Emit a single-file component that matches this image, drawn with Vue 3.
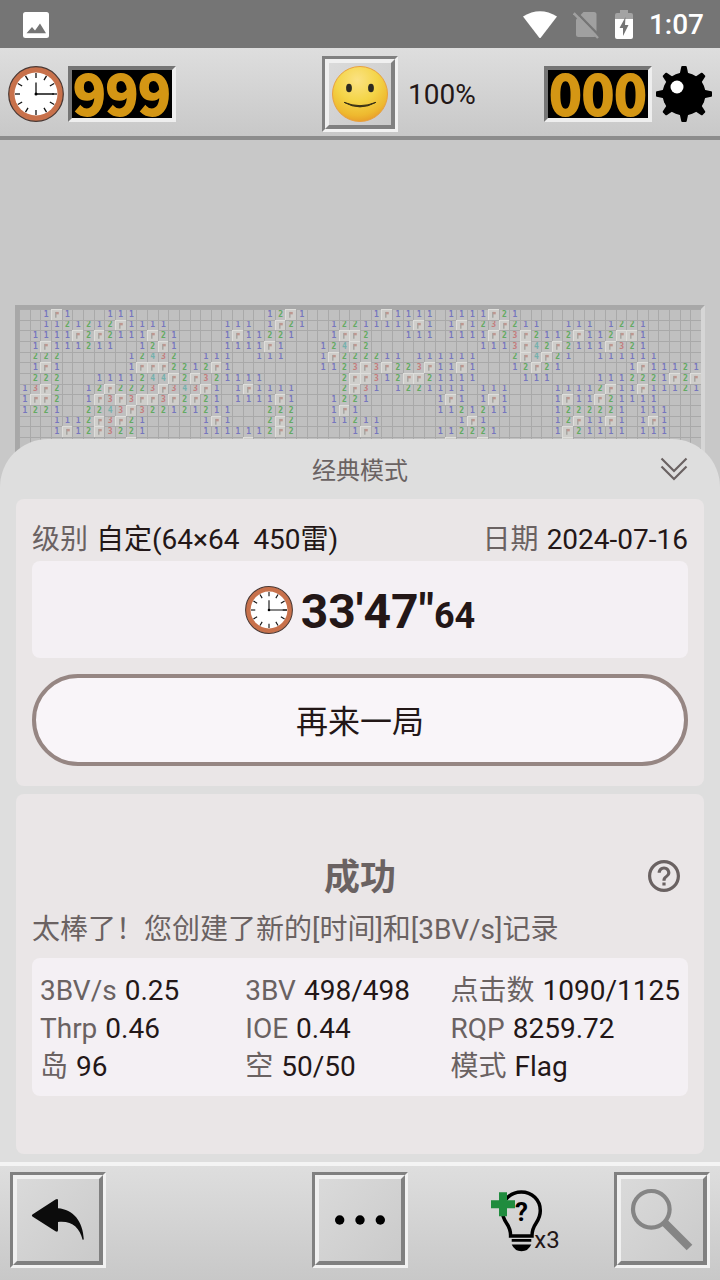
<template>
  <div class="app">
    <header class="status">
      <svg class="status-photo" viewBox="0 0 26 26">
        <rect width="26" height="26" rx="2.5" fill="#fff" />
        <path d="M3.5 21.3 9 15l3 3.4 5-6.9 6 9.8z" fill="#757575" />
      </svg>
      <div class="status-right">
        <svg width="34" height="28" viewBox="0 0 34 28">
          <path d="M0 5.500Q17-5 34 5.500L17.900 26.500Q17 27.500 16.100 26.500z" fill="#fff" />
        </svg>
        <svg width="26" height="28" viewBox="0 0 26 28">
          <path d="M10.500 1H21q2.500 0 2.500 2.500v20q0 2.500-2.500 2.500H5.500Q3 26 3 23.500V8.500z" fill="#a0a0a0" />
          <path d="M2.500.500 26.500 25" stroke="#757575" stroke-width="2.500" />
          <path d="M.800 2.200 25 27" stroke="#a0a0a0" stroke-width="2.500" />
        </svg>
        <svg width="18" height="30" viewBox="0 0 18 30">
          <path d="M0 10V5q0-2 2-2h3V0h8v3h3q2 0 2 2v5z" fill="#a3a3a3" />
          <path d="M0 9h18v18q0 2-2 2H2q-2 0-2-2z" fill="#fff" />
          <path d="M10.500 7 4.500 18H8v8l5.500-11H10z" fill="#757575" />
        </svg>
        <span class="status-time">1:07</span>
      </div>
    </header>

    <div class="toolbar">
      <div class="toolbar-left">
        <svg class="icon-56" viewBox="0 0 56 56">
          <circle cx="28" cy="28" r="27.300" fill="#c8714b" stroke="#4a3833" stroke-width="1.200" />
          <circle cx="28" cy="28" r="21.500" fill="#fff" />
          <path
            v-for="n in 12"
            :key="n"
            d="M28 7v5"
            stroke="#111"
            stroke-width="1.300"
            :transform="`rotate(${n * 30} 28 28)`"
          />
          <path d="M28 16.500V28h18" fill="none" stroke="#111" stroke-width="1.300" />
          <circle cx="28" cy="28" r="1.500" />
        </svg>
        <span class="counter">999</span>
      </div>
      <button class="bevel face" aria-label="新游戏">
        <svg viewBox="0 0 56 56">
          <defs>
            <radialGradient id="faceFill" cx="0.45" cy="0.25" r="0.75">
              <stop offset="0" stop-color="#fbe284" />
              <stop offset="0.5" stop-color="#f4d548" />
              <stop offset="0.85" stop-color="#eeb92f" />
              <stop offset="1" stop-color="#e9a02a" />
            </radialGradient>
          </defs>
          <circle cx="28" cy="28" r="27.500" fill="url(#faceFill)" stroke="#e8a040" />
          <ellipse cx="17" cy="22" rx="2.900" ry="4.300" fill="#2c2a20" />
          <ellipse cx="39" cy="22" rx="2.900" ry="4.300" fill="#2c2a20" />
          <path d="M12 36.300Q28 45.500 44 36.300 28 43 12 36.300z" fill="#3a3215" stroke="#3a3215" />
        </svg>
      </button>
      <div class="toolbar-right">
        <span class="percent">100%</span>
        <span class="counter counter-mines">000</span>
        <svg class="icon-56" viewBox="0 0 56 56">
          <circle cx="28" cy="28" r="21.500" />
          <path
            v-for="n in 8"
            :key="n"
            d="M23.500 9 25.300.8q.2-.8 1-.8h3.400q.8 0 1 .8L32.500 9z"
            :transform="`rotate(${n * 45} 28 28)`"
          />
          <circle cx="21" cy="21" r="6.500" fill="#fff" />
        </svg>
      </div>
    </div>

    <main class="stage">
      <div class="board">
        <template v-for="(row, y) in rows" :key="y">
          <span v-for="(cell, x) in row" :key="x" class="cell" :class="cellClass(cell)">
            <svg v-if="cell === 'F'" viewBox="0 0 10 10">
              <path d="M4 2v6" stroke="#8f8f8b" />
              <path d="M4 2h3v2.500H4z" fill="#bd9790" />
            </svg>
            <template v-else-if="cell !== '.'">{{ cell }}</template>
          </span>
        </template>
      </div>
    </main>

    <section class="sheet">
      <div class="sheet-head">
        <span>经典模式</span>
        <button class="plain collapse" aria-label="收起">
          <svg width="28" height="24" viewBox="0 0 28 24">
            <path
              d="M1.500 1.500 14 14 26.500 1.500M1.500 9.500 14 22 26.500 9.500"
              fill="none"
              stroke="#6a6262"
              stroke-width="2.200"
            />
          </svg>
        </button>
      </div>

      <div class="card result">
        <div class="meta">
          <p><span class="label">级别</span>自定(64×64&nbsp; 450雷)</p>
          <p><span class="label">日期</span>2024-07-16</p>
        </div>
        <div class="panel time">
          <svg class="icon-48" viewBox="0 0 56 56">
            <circle cx="28" cy="28" r="27.300" fill="#c8714b" stroke="#4a3833" stroke-width="1.200" />
            <circle cx="28" cy="28" r="21.500" fill="#fff" />
            <path
              v-for="n in 12"
              :key="n"
              d="M28 7v5"
              stroke="#111"
              stroke-width="1.300"
              :transform="`rotate(${n * 30} 28 28)`"
            />
            <path d="M28 16.500V28h21" fill="none" stroke="#111" stroke-width="1.300" />
            <circle cx="28" cy="28" r="1.500" />
          </svg>
          <strong>33'47"<small>64</small></strong>
        </div>
        <button class="again">再来一局</button>
      </div>

      <div class="card summary">
        <div class="summary-head">
          <h2>成功</h2>
          <button class="plain help" aria-label="帮助">
            <svg width="32" height="32" viewBox="2 2 20 20">
              <path
                d="M11 18h2v-2h-2v2zm1-16C6.480 2 2 6.480 2 12s4.480 10 10 10 10-4.480 10-10S17.520 2 12 2zm0 18c-4.410 0-8-3.590-8-8s3.590-8 8-8 8 3.590 8 8-3.590 8-8 8zm0-14c-2.210 0-4 1.790-4 4h2c0-1.100.900-2 2-2s2 .900 2 2c0 2-3 1.750-3 5h2c0-2.250 3-2.500 3-5 0-2.210-1.790-4-4-4z"
                fill="#6a6262"
              />
            </svg>
          </button>
        </div>
        <p class="message">太棒了！您创建了新的[时间]和[3BV/s]记录</p>
        <dl class="panel stats">
          <div v-for="item in stats" :key="item.label">
            <dt>{{ item.label }}</dt>
            <dd>{{ item.value }}</dd>
          </div>
        </dl>
      </div>
    </section>

    <footer class="actions">
      <button class="bevel action" aria-label="返回">
        <svg viewBox="7 7 82 82">
          <path
            d="M22.400 42.600 45.500 27.600Q48 26.200 48 28.500V36.300C63 37.500 73 49 73.800 67.500L72.600 67.800C69.500 55.500 62 48.500 48 50V58Q48 60.500 45.500 59.200L22.400 44.600Q21.300 43.600 22.400 42.600z"
            fill="#0c0c0c"
          />
        </svg>
      </button>
      <button class="bevel action more" aria-label="更多">
        <svg viewBox="7 7 82 82">
          <circle cx="27.700" cy="48" r="4.700" />
          <circle cx="48" cy="48" r="4.700" />
          <circle cx="68.300" cy="48" r="4.700" />
        </svg>
      </button>
      <button class="plain hint" aria-label="提示">
        <svg width="56" height="66" viewBox="0 0 56 66">
          <path
            d="M31.300 4C42 4 50.300 12 50.300 22.500 50.300 35.500 41.800 34.500 42 48H20.600C20.800 34.500 12.300 35.500 12.300 22.500 12.300 12 20.600 4 31.300 4z"
            fill="none"
            stroke="#000"
            stroke-width="3.500"
          />
          <path d="M21.700 51h19.600v2.800H21.700zM21.700 56.500h19.600q-3 6.700-9.800 6.700t-9.800-6.700z" />
          <text x="31.500" y="33" class="hint-mark">?</text>
          <path d="M9 4.300h8v8h8v8h-8v8H9v-8H1v-8h8z" fill="#208c3e" />
        </svg>
        <span>x3</span>
      </button>
      <button class="bevel action" aria-label="缩放">
        <svg viewBox="7 7 82 82">
          <circle cx="37.300" cy="37.300" r="18.300" fill="none" stroke="#858585" stroke-width="4.200" />
          <path d="M50 50 75.500 75.500" stroke="#858585" stroke-width="8" />
        </svg>
      </button>
    </footer>
  </div>
</template>

<script setup>
// '.' opened empty cell, 'F' flag, digits are neighbour counts
const rows = [
  '..1F1...111..........' + '..12F1......1F1111.111' + '1F21.................',
  '..1121212F1111.....11' + '1.1F21..12211111F1.1F1' + '23F211..111.1221.....',
  '.1111F2F2111F21....1F' + '11221...1FF2...111.111' + '1F23F2112F112FF1.....',
  '.1F111211..12F1....11' + '11F1...124F2..........' + '1113F42F2111F321.....',
  '.222......12432..111.' + '.111...1F222211.111111' + '...2F4F21..111111....',
  '.1F1......1FFF2212F1.' + '.......1123F3F223F11F1' + '...12F21......1F11121',
  '.222...1111244F2F3211' + '11.......2FF312FF21111' + '....111....1112221F2F',
  '13F2..12F2223F343F1.1' + 'F1111....2F31.1221111.' + '111....11112F11F11121',
  '1FF2..1F3F3FF3F2F21.1' + '111F1...1221......1F1.' + '1F1....1F11F21111....',
  '1221..2243F322121211.' + '..222...1F1.......1121' + '211....1222221.111...',
  '...1112F3F21.....1F1.' + '..2F2...11211.......1F' + '1......12F11F1.1F1...',
  '...1F12F3221.....1111' + '112F2.....1F1.....1122' + '21.....1F21111.111...',
  '..........F..........' + 'F..................F..' + 'F.......F............',
  '.'.repeat(64)
]

const stats = [
  { label: '3BV/s', value: '0.25' },
  { label: '3BV', value: '498/498' },
  { label: '点击数', value: '1090/1125' },
  { label: 'Thrp', value: '0.46' },
  { label: 'IOE', value: '0.44' },
  { label: 'RQP', value: '8259.72' },
  { label: '岛', value: '96' },
  { label: '空', value: '50/50' },
  { label: '模式', value: 'Flag' }
]

function cellClass(cell) {
  if (cell === 'F') return 'flag'
  return cell === '.' ? '' : `n${cell}`
}
</script>

<style>
body {
  background: #c8c8c8;
}
</style>

<style scoped>
.app {
  display: flex;
  flex-direction: column;
  min-height: 100vh;
  font-family: Roboto, 'Noto Sans CJK SC', sans-serif;
  font-size: 28px;
  color: #231717;
}

.app * {
  box-sizing: border-box;
}

svg {
  display: block;
  flex: none;
}

p,
h2,
dl,
dd {
  margin: 0;
}

button {
  padding: 0;
  font-family: inherit;
  color: inherit;
}

.plain {
  border: 0;
  background: none;
}

.icon-56 {
  width: 56px;
  height: 56px;
}

.icon-48 {
  width: 48px;
  height: 48px;
}

/* status bar */
.status {
  display: flex;
  align-items: center;
  justify-content: space-between;
  height: 48px;
  padding: 2px 16px 0 23px;
  background: #757575;
  color: #fff;
}

.status-photo {
  width: 26px;
  height: 26px;
}

.status-right {
  display: flex;
  align-items: center;
  gap: 16px;
}

.status-time {
  font-weight: 500;
  line-height: 32px;
}

/* top toolbar */
.toolbar {
  display: grid;
  grid-template-columns: 1fr auto 1fr;
  align-items: center;
  height: 92px;
  padding: 4px 8px 0;
  border-bottom: 4px solid #8c8c8c;
  background: linear-gradient(#dedede, #c8c8c8);
}

.toolbar-left,
.toolbar-right {
  display: flex;
  align-items: center;
  gap: 4px;
}

.counter {
  width: 108px;
  height: 56px;
  border: 4px solid;
  border-color: #757575 #eee #eee #757575;
  background: #000;
  color: #d49614;
  font-family: 'Noto Sans CJK SC', sans-serif;
  font-size: 55px;
  font-weight: 700;
  line-height: 42px;
  text-align: center;
  -webkit-text-stroke: 2px #d49614;
}

.counter-mines {
  margin-left: auto;
}

.percent {
  padding-left: 10px;
}

.bevel {
  border: 3px solid;
  border-color: #808080 #f2f2f2 #f2f2f2 #808080;
  background: none;
}

.bevel svg {
  width: 100%;
  height: 100%;
  border: 4px solid;
  border-color: #f0f0f0 #808080 #808080 #f0f0f0;
  background: linear-gradient(135deg, #dadada, #cacaca);
}

.face {
  width: 76px;
  height: 76px;
}

.face svg {
  padding: 3px;
}

/* mine field */
.stage {
  flex: 1;
  padding: 165px 15px 0;
  background: #c8c8c8;
}

.board {
  display: grid;
  grid-template-columns: repeat(64, 1fr);
  border: 4px solid;
  border-color: #a8a8a8 #d6d6d6 #d6d6d6 #a8a8a8;
  background: #c0c0c0;
}

.cell {
  display: flex;
  align-items: center;
  justify-content: center;
  min-width: 0;
  aspect-ratio: 1;
  overflow: hidden;
  border: solid #a9a9a9;
  border-width: 1px 0 0 1px;
  font-family: 'DejaVu Sans Mono', monospace;
  font-size: 8px;
  font-weight: 700;
  line-height: 8px;
}

.flag {
  border-color: #dededb;
  background: #cfcecb;
}

.flag svg {
  width: 100%;
  height: 100%;
}

.n1 {
  color: #7676be;
}

.n2 {
  color: #62aa62;
}

.n3 {
  color: #c47c7c;
}

.n4 {
  color: #74b0ac;
}

/* result sheet */
.sheet {
  display: flex;
  flex-direction: column;
  gap: 8px;
  margin-top: -23px;
  padding: 0 16px 8px;
  border-radius: 48px 48px 0 0;
  background: #dedede;
}

.sheet-head {
  display: grid;
  grid-template-columns: 1fr auto 1fr;
  align-items: center;
  height: 60px;
  margin-bottom: -8px;
  padding: 0 16px;
  color: #6a6262;
  font-size: 24px;
}

.sheet-head span {
  grid-column: 2;
  padding-bottom: 2px;
}

.collapse {
  justify-self: end;
}

.card {
  border-radius: 8px;
  background: #eae6e7;
}

.panel {
  border-radius: 8px;
  background: #f4f0f4;
}

.result {
  padding: 20px 16px;
}

.meta {
  display: flex;
  justify-content: space-between;
  line-height: 42px;
  white-space: nowrap;
}

.label,
dt {
  color: #6a6262;
}

.label {
  margin-right: 8px;
}

.time {
  display: flex;
  align-items: center;
  justify-content: center;
  gap: 8px;
  height: 97px;
}

.time strong {
  padding-top: 8px;
  font-size: 48px;
  line-height: 56px;
}

.time small {
  font-size: 36px;
}

.again {
  display: block;
  width: 100%;
  height: 92px;
  margin-top: 16px;
  padding-bottom: 2px;
  border: 4px solid #968683;
  border-radius: 46px;
  background: #f9f5f9;
  font-size: 32px;
}

.summary {
  padding: 56px 16px 58px;
}

.summary-head {
  display: grid;
  grid-template-columns: 1fr auto 1fr;
  align-items: center;
  padding-right: 8px;
  padding-left: 8px;
  color: #6a6262;
}

.summary-head h2 {
  grid-column: 2;
  padding-top: 4px;
  font-size: 36px;
  line-height: 48px;
}

.help {
  justify-self: end;
}

.message {
  color: #6a6262;
  line-height: 56px;
}

.stats {
  display: grid;
  grid-template-columns: 1fr 1fr auto;
  padding: 14px 8px 10px;
  line-height: 38px;
  white-space: nowrap;
}

.stats div {
  display: flex;
  gap: 8px;
}

/* bottom bar */
.actions {
  display: grid;
  grid-template-columns: auto 1fr auto 1fr auto;
  padding: 6px 10px 12px;
  border-top: 4px solid #f4f4f4;
  background: linear-gradient(#dedede, #c8c8c8);
}

.action {
  width: 96px;
  height: 96px;
}

.more {
  grid-column: 3;
}

.hint {
  display: flex;
  align-items: flex-end;
  justify-content: center;
  padding: 0 0 14px 28px;
}

.hint span {
  margin-bottom: 2px;
  margin-left: -12px;
  font-size: 24px;
  line-height: 24px;
}

.hint-mark {
  font-size: 26px;
  font-weight: 700;
  text-anchor: middle;
}
</style>
